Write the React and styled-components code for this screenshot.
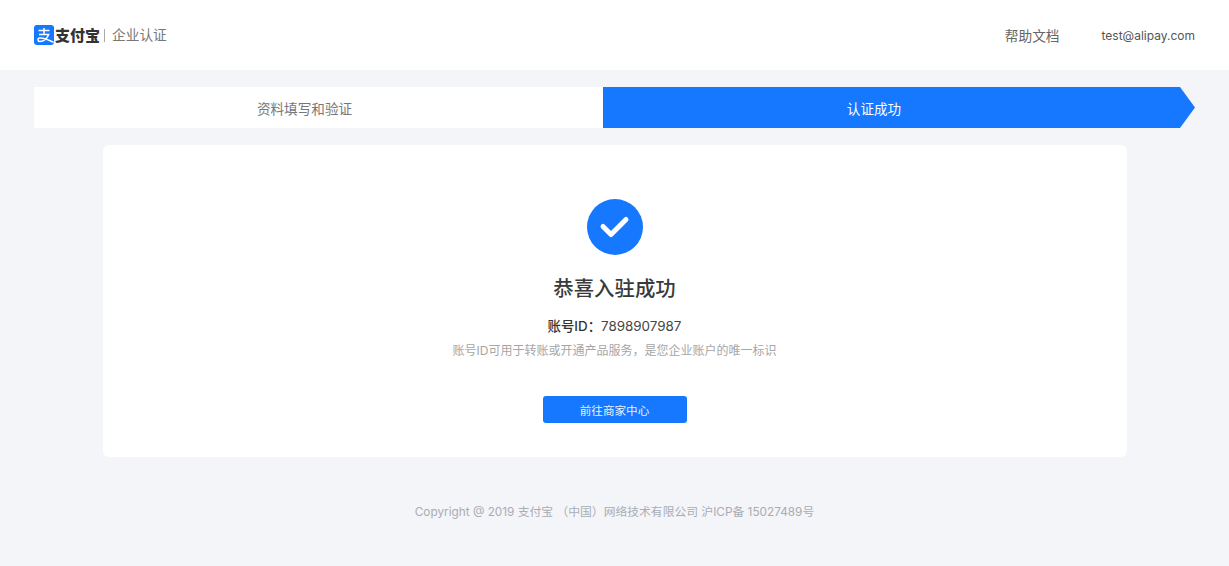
import React from 'react'
import styled, { createGlobalStyle } from 'styled-components'

const GlobalStyle = createGlobalStyle`
  html, body {
    margin: 0;
    padding: 0;
    background: #f4f5f9;
    font-family: Inter, "Liberation Sans", "Noto Sans CJK SC", sans-serif;
  }
`

const Page = styled.div`
  display: flex;
  flex-direction: column;
  min-height: 566px;
  background: #f4f5f9;
`

const Header = styled.header`
  display: flex;
  align-items: center;
  justify-content: space-between;
  height: 70px;
  padding: 0 34px;
  background: #fff;
`

const Brand = styled.div`
  display: flex;
  align-items: center;
`

const BrandLogo = styled.svg`
  display: block;
  width: 20px;
  height: 20px;
`

const BrandName = styled.span`
  margin-left: 1px;
  font-family: "Noto Sans CJK SC", sans-serif;
  font-size: 15px;
  line-height: 20px;
  font-weight: 900;
  color: #333;
`

const BrandDivider = styled.span`
  width: 1px;
  height: 13px;
  margin: 0 7px 0 4px;
  background: #aaa;
`

const BrandSub = styled.span`
  font-size: 13.7px;
  line-height: 20px;
  color: #777;
`

const HeaderLinks = styled.nav`
  display: flex;
  align-items: center;
  gap: 42px;
`

const HelpLink = styled.a`
  font-size: 13.7px;
  color: #666;
`

const Email = styled.span`
  font-size: 12px;
  color: #555;
`

const Main = styled.main`
  display: flex;
  flex-direction: column;
  padding: 17px 34px 0;
`

const Steps = styled.div`
  display: flex;
  height: 41px;
`

const Step = styled.div`
  display: flex;
  align-items: center;
  justify-content: center;
  font-size: 13.6px;
  width: ${p => (p.$active ? '592px' : '569px')};
  padding-right: ${p => (p.$active ? '50px' : '28px')};
  box-sizing: border-box;
  color: ${p => (p.$active ? '#fff' : '#777')};
  background: ${p => (p.$active ? '#1677ff' : '#fff')};
  clip-path: ${p =>
    p.$active ? 'polygon(0 0, 577px 0, 100% 50%, 577px 100%, 0 100%)' : 'none'};
`

const Card = styled.section`
  display: flex;
  flex-direction: column;
  align-items: center;
  height: 312px;
  margin: 17px 68.5px 0;
  padding-top: 54px;
  box-sizing: border-box;
  background: #fff;
  border-radius: 6px;
`

const SuccessIcon = styled.svg`
  display: block;
  width: 56px;
  height: 56px;
`

const Title = styled.h1`
  margin: 19px 0 0;
  font-size: 20.4px;
  line-height: 30px;
  font-weight: 500;
  color: #3a3a3a;
`

const AccountId = styled.div`
  margin-top: 12px;
  font-size: 13.4px;
  line-height: 20px;
  color: #444;
`

const AccountLabel = styled.span`
  font-weight: 500;
  color: #333;
`

const Description = styled.p`
  margin: 6px 0 0;
  font-size: 12px;
  line-height: 18px;
  color: #a6a6a6;
`

const PrimaryButton = styled.button`
  width: 144px;
  height: 27px;
  margin-top: 36px;
  padding: 0;
  border: none;
  border-radius: 3px;
  background: #1677ff;
  color: #e8f1ff;
  font-family: inherit;
  font-size: 11.6px;
`

const Footer = styled.footer`
  margin-top: 46px;
  text-align: center;
  font-size: 11.8px;
  line-height: 18px;
  color: #a9acb3;
`

export default function App() {
  return (
    <Page>
      <GlobalStyle />
      <Header>
        <Brand>
          <BrandLogo viewBox="0 0 20 20">
            <rect width="20" height="20" rx="3" fill="#1677ff" />
            <path
              d="M4.5 5.6h11M10 3v6.4M5 9.4h9.6C13 13.6 9.4 16.4 6 16.4c-2.6 0-2.8-3-.4-3.4 4-.6 9 1.8 14 4.4"
              fill="none"
              stroke="#fff"
              strokeWidth="1.5"
            />
          </BrandLogo>
          <BrandName>支付宝</BrandName>
          <BrandDivider />
          <BrandSub>企业认证</BrandSub>
        </Brand>
        <HeaderLinks>
          <HelpLink>帮助文档</HelpLink>
          <Email>test@alipay.com</Email>
        </HeaderLinks>
      </Header>
      <Main>
        <Steps>
          <Step>资料填写和验证</Step>
          <Step $active>认证成功</Step>
        </Steps>
        <Card>
          <SuccessIcon viewBox="0 0 56 56">
            <circle cx="28" cy="28" r="28" fill="#1677ff" />
            <path
              d="M16 27.5l8 8L39 20.5"
              fill="none"
              stroke="#fff"
              strokeWidth="5"
              strokeLinecap="round"
              strokeLinejoin="round"
            />
          </SuccessIcon>
          <Title>恭喜入驻成功</Title>
          <AccountId>
            <AccountLabel>账号ID{'\uFF1A'}</AccountLabel>7898907987
          </AccountId>
          <Description>账号ID可用于转账或开通产品服务{'\uFF0C'}是您企业账户的唯一标识</Description>
          <PrimaryButton>前往商家中心</PrimaryButton>
        </Card>
        <Footer>Copyright @ 2019 支付宝 {'\uFF08'}中国{'\uFF09'}网络技术有限公司 沪ICP备 15027489号</Footer>
      </Main>
    </Page>
  )
}
